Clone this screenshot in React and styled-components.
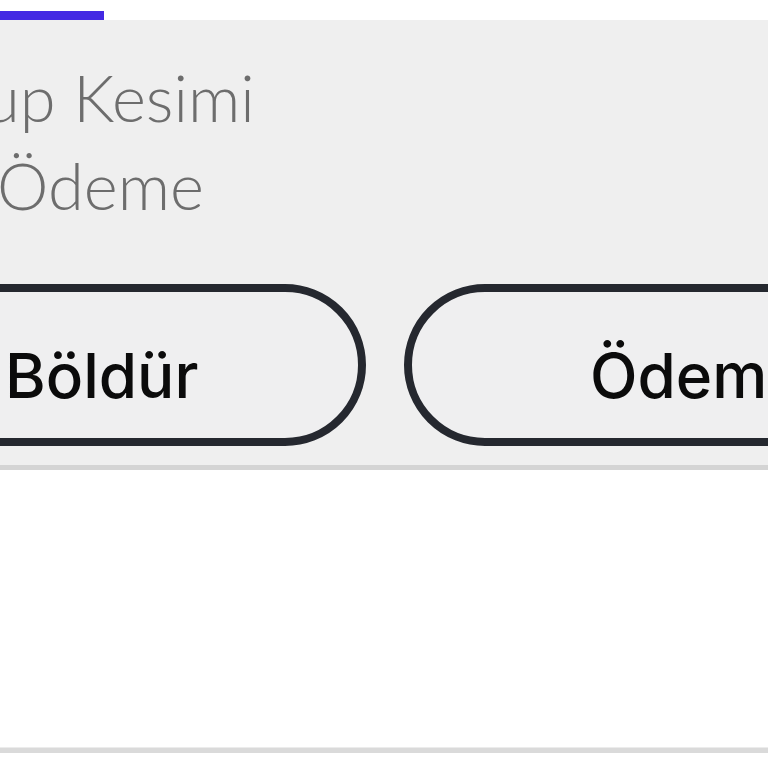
import React from "react";
import styled, { createGlobalStyle } from "styled-components";

const GlobalStyle = createGlobalStyle`
  html, body {
    margin: 0;
    padding: 0;
    background: #ffffff;
    overflow: hidden;
  }
  * { box-sizing: border-box; }
`;

const Page = styled.div`
  width: 768px;
  height: 768px;
  overflow: hidden;
  display: flex;
  flex-direction: column;
`;

const TabStrip = styled.div`
  height: 20px;
  display: flex;
  align-items: flex-end;
  background: #ffffff;
`;

const TabIndicator = styled.div`
  width: 104px;
  height: 9px;
  background: #4429e3;
`;

const Panel = styled.section`
  background: #efefef;
  border-bottom: 5px solid #d4d4d4;
  padding: 33px 0 19px;
  display: flex;
  flex-direction: column;
  gap: 55px;
`;

const Title = styled.div`
  font-family: "Lato", "Noto Sans", sans-serif;
  font-weight: 300;
  font-size: 65px;
  line-height: 88px;
  color: #6d6d6d;
  white-space: nowrap;
`;

const TitleLine = styled.div`
  margin-left: ${(p) => p.$shift}px;
`;

const ButtonRow = styled.div`
  display: flex;
  gap: 38px;
  margin-left: -160px;
`;

const PillButton = styled.button`
  flex: none;
  width: ${(p) => p.$width}px;
  height: 162px;
  border: 8px solid #25282f;
  border-radius: 81px;
  background: #efeff0;
  display: flex;
  align-items: center;
  justify-content: flex-start;
  padding: 20px 0 0 ${(p) => p.$inset}px;
  font-family: "Inter", "Liberation Sans", sans-serif;
  font-weight: 500;
  font-size: 62px;
  color: #0b0b0b;
  white-space: nowrap;
  cursor: pointer;
`;

const Spacer = styled.div`
  height: 277px;
  background: #ffffff;
`;

const Divider = styled.div`
  height: 6px;
  background: #dadada;
  border-top: 1px solid #ececec;
`;

export default function App() {
  return (
    <>
      <GlobalStyle />
      <Page>
        <TabStrip>
          <TabIndicator />
        </TabStrip>
        <Panel>
          <Title>
            <TitleLine $shift={-16}>up Kesimi</TitleLine>
            <TitleLine $shift={-3}>Ödeme</TitleLine>
          </Title>
          <ButtonRow>
            <PillButton $width={526} $inset={157}>Böldür</PillButton>
            <PillButton $width={560} $inset={178}>Ödeme</PillButton>
          </ButtonRow>
        </Panel>
        <Spacer />
        <Divider />
      </Page>
    </>
  );
}
